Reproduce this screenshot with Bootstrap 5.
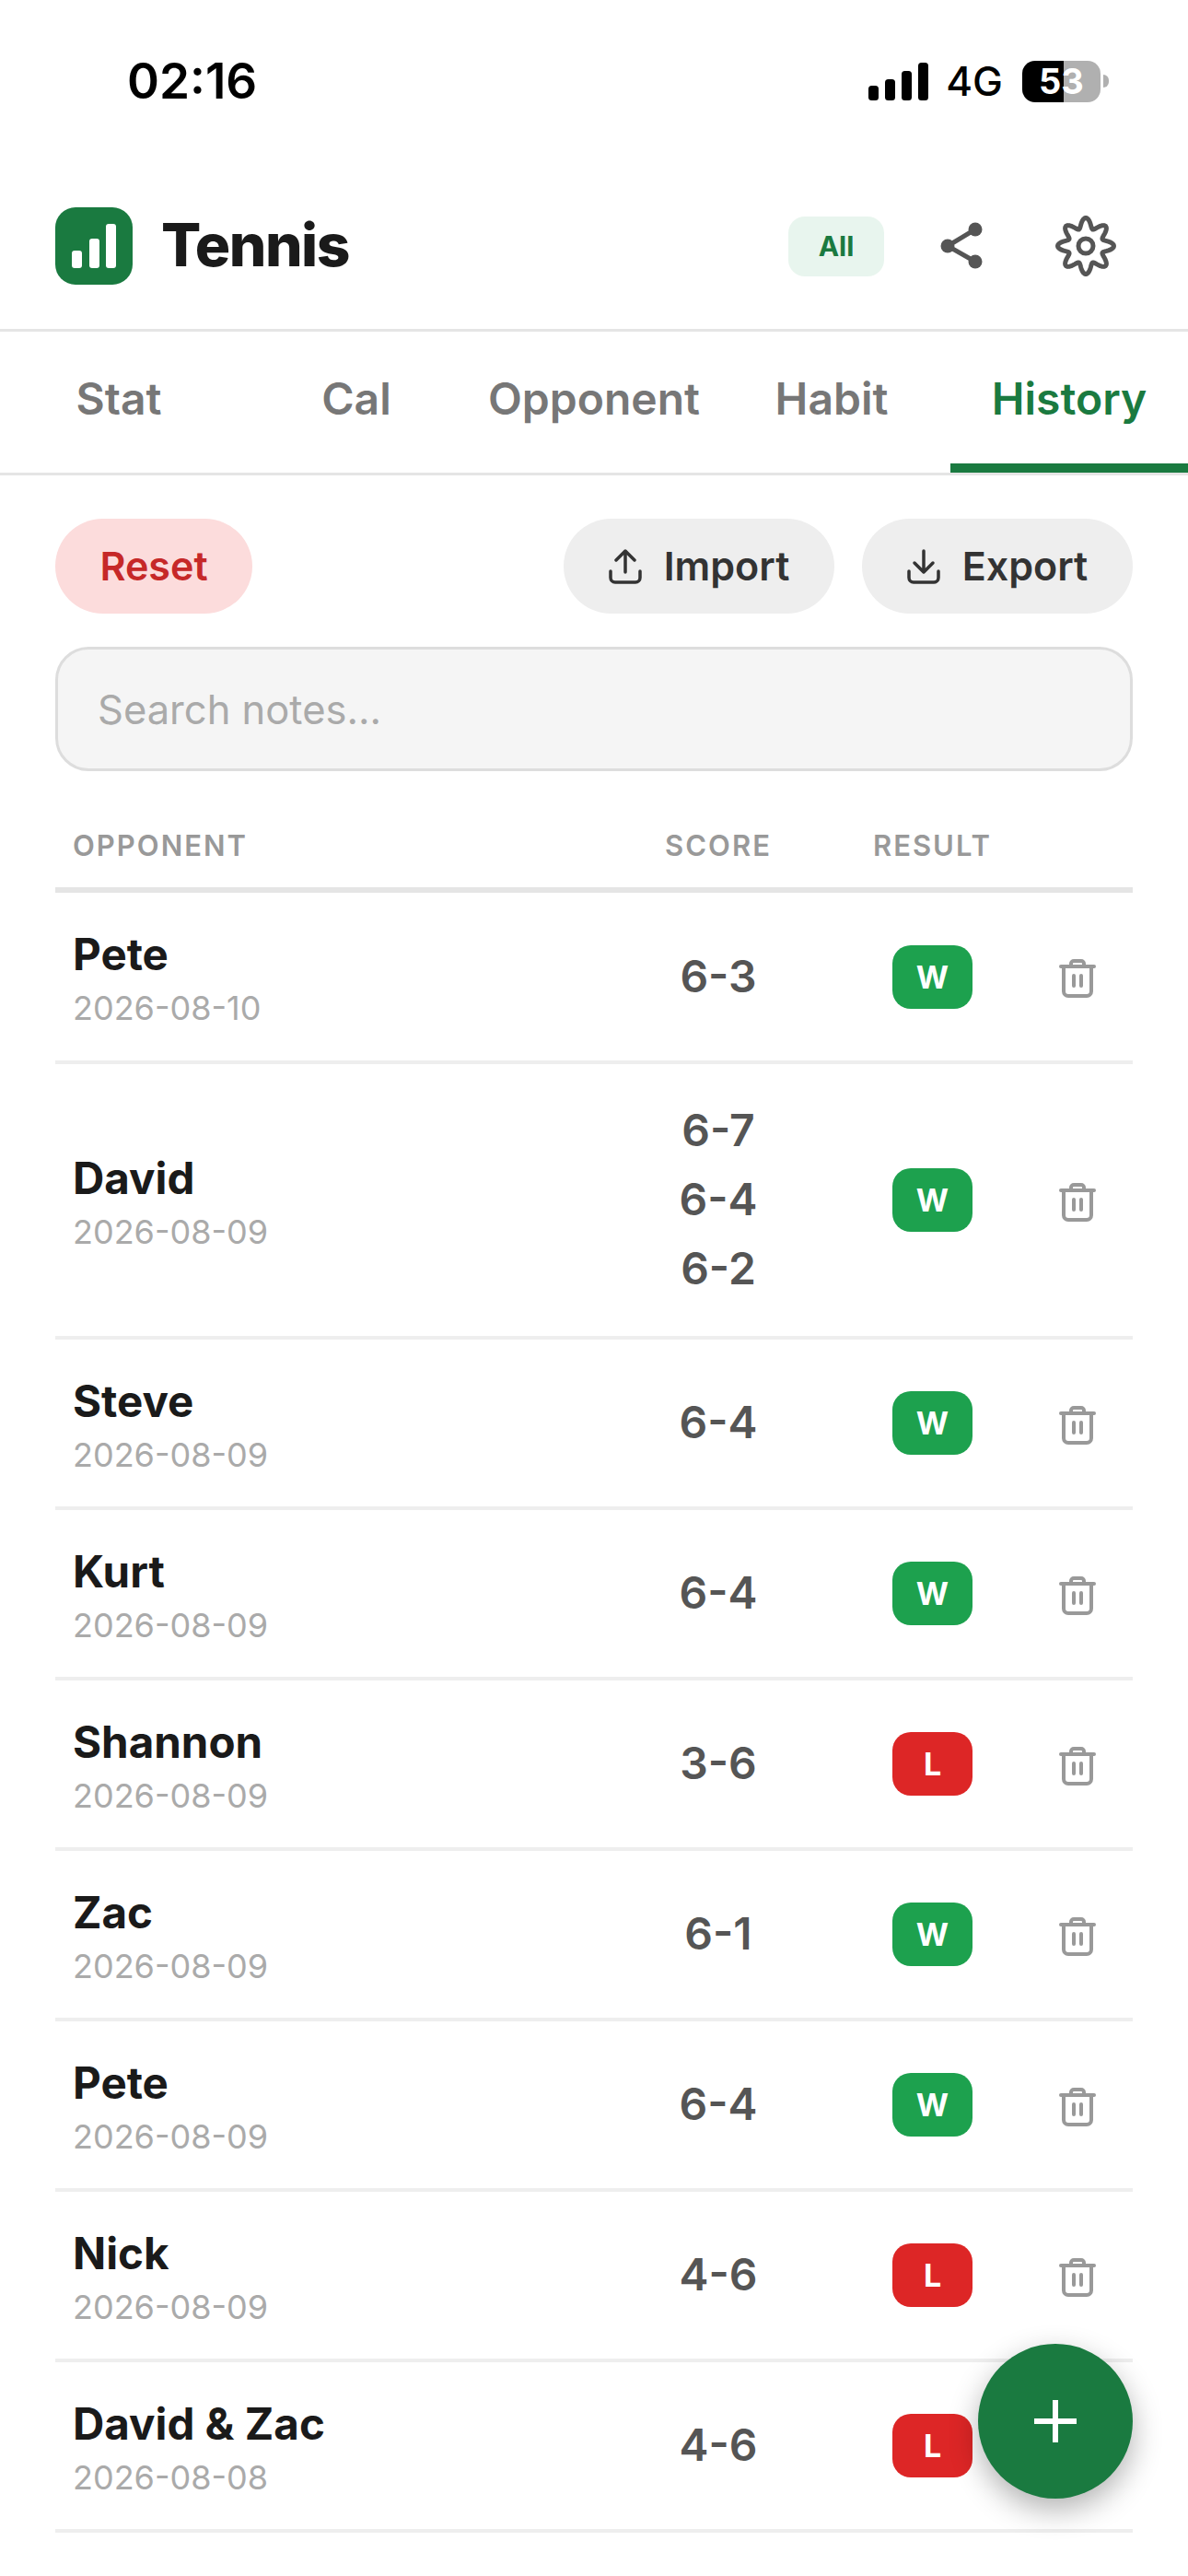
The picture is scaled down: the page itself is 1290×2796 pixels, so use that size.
<!DOCTYPE html>
<html lang="en">
  <head>
    <meta charset="UTF-8" />
    <meta name="viewport" content="width=device-width, initial-scale=1.0" />
    <link href="https://cdn.jsdelivr.net/npm/bootstrap@5.3.1/dist/css/bootstrap.min.css" rel="stylesheet" />
    <style>
      html, body { height: 2796px; overflow: hidden; }
      body { font-family: Inter, "Liberation Sans", sans-serif; background: #fff; color: #1a1a1a; }
      .app-shell { position: relative; width: 1290px; height: 2796px; overflow: hidden; }

      .status-bar { height: 177px; padding: 0 86px 1px 138px; }
      .status-time { font-size: 53px; font-weight: 600; color: #000; line-height: 1; }
      .status-signal { width: 65px; height: 41px; margin-right: 19px; }
      .status-net { font-size: 44px; font-weight: 500; color: #000; line-height: 1; margin-right: 21px; }
      .status-batt { width: 85px; height: 45px; border-radius: 14px; background: linear-gradient(90deg, #000 53%, #b0b0b0 53%); color: #fff; font-size: 38px; font-weight: 700; line-height: 45px; text-align: center; }
      .status-nub { width: 6px; height: 14px; margin-left: 3px; background: #b0b0b0; border-radius: 0 6px 6px 0; }

      .app-head { height: 183px; padding: 0 60px; border-bottom: 3px solid #e5e5e5; }
      .app-title { font-size: 64px; font-weight: 800; color: #1a1a1a; line-height: 1; letter-spacing: -1.5px; margin: 0 0 3px 31px; }
      .scope-chip { width: 104px; height: 65px; background: #e8f5ee; color: #1a7a40; border-radius: 18px; font-size: 30px; font-weight: 700; line-height: 65px; text-align: center; }
      .head-share { width: 50px; height: 60px; margin-left: 59px; }
      .head-gear { width: 70px; height: 70px; margin: 0 16px 0 75px; }

      .tab-strip { height: 156px; border-bottom: 3px solid #e5e5e5; }
      .tab-strip .nav-link { height: 153px; padding: 0; line-height: 145px; font-size: 48px; font-weight: 600; color: #777; border-radius: 0; }
      .tab-strip .nav-link.active { color: #1a7a40; border-bottom: 10px solid #1a7a40; background: none; }

      .tools { padding: 47px 60px 0; }
      .btn-pilled { height: 103px; border: 0; font-size: 43px; font-weight: 600; padding: 0; line-height: 1; }
      .btn-reset { background: #fcdcdc; color: #c62828; width: 214px; }
      .btn-file { background: #eeeeee; color: #333; width: 294px; }
      .btn-file + .btn-file { margin-left: 30px; }
      .btn-file svg { width: 36px; height: 38px; }
      .search-notes { height: 135px; margin-top: 36px; padding: 0 43px; font-size: 43.5px; background: #f5f5f5; border: 3px solid #ddd; border-radius: 36px; }
      .search-notes::placeholder { color: #aaa; opacity: 1; }

      .games-wrap { padding: 0 60px; margin-top: 36px; }
      .games { table-layout: fixed; border-collapse: separate; border-spacing: 0; width: 1170px; margin: 0; }
      .games col:nth-child(1) { width: 585px; }
      .games col:nth-child(2) { width: 270px; }
      .games col:nth-child(3) { width: 195px; }
      .games col:nth-child(4) { width: 120px; }
      .games th { height: 96px; padding: 0; font-size: 31px; font-weight: 600; letter-spacing: 2px; color: #999; border-bottom: 6px solid #e5e5e5; vertical-align: middle; text-align: center; }
      .games th:first-child, .games td:first-child { text-align: left; padding-left: 19px; }
      .games td { height: 185px; padding: 0; border-bottom: 4px solid #eeeeee; vertical-align: middle; text-align: center; }
      .games tbody tr:first-child td { height: 186px; }
      .games td.game-score { padding: 34px 0 36px; }
      .games td.game-del { padding-top: 4px; }
      .player-name { font-size: 47.5px; font-weight: 700; line-height: 68px; color: #1a1a1a; }
      .player-date { font-size: 36px; font-weight: 400; line-height: 48px; color: #aaa; }
      .score-line { font-size: 48px; font-weight: 600; line-height: 75px; color: #555; }
      .res-chip { display: inline-block; width: 87px; height: 69px; padding: 0; border-radius: 20px; font-size: 34px; font-weight: 700; line-height: 69px; color: #fff; }
      .res-W { background: #1da14e; }
      .res-L { background: #dd2626; }
      .trash-ico { width: 40px; height: 42px; display: block; margin: 0 auto; }

      .fab-add { position: absolute; left: 1062px; top: 2544px; width: 168px; height: 168px; border: 0; border-radius: 50%; background: #1a7a40; box-shadow: 0 12px 32px rgba(0, 0, 0, .3); padding: 0; }
      .fab-add svg { width: 46px; height: 46px; }
    </style>
    <title>Tennis</title>
  </head>
  <body>
    <template id="game-template">
      <tr>
        <td><div class="player-name"></div><div class="player-date"></div></td>
        <td class="game-score"></td>
        <td><span class="badge res-chip"></span></td>
        <td class="game-del">
          <svg class="trash-ico" viewBox="0 0 40 42" fill="none" stroke="#999" stroke-width="4" stroke-linecap="round" stroke-linejoin="round">
            <path d="M2 8h36" />
            <path d="M13 7V5a3 3 0 0 1 3-3h8a3 3 0 0 1 3 3v2" />
            <path d="M5 8v27a5 5 0 0 0 5 5h20a5 5 0 0 0 5-5V8" />
            <path d="M16 18v11M24 18v11" />
          </svg>
        </td>
      </tr>
    </template>

    <div class="app-shell">
      <div class="status-bar d-flex align-items-center">
        <div class="status-time">02:16</div>
        <div class="ms-auto d-flex align-items-center">
          <svg class="status-signal" viewBox="0 0 65 41">
            <rect x="0" y="25" width="11" height="16" rx="3.5" />
            <rect x="18" y="18" width="11" height="23" rx="3.5" />
            <rect x="36" y="9" width="11" height="32" rx="3.5" />
            <rect x="54" y="0" width="11" height="41" rx="3.5" />
          </svg>
          <div class="status-net">4G</div>
          <div class="status-batt">53</div>
          <div class="status-nub"></div>
        </div>
      </div>

      <div class="app-head d-flex align-items-center">
        <svg width="84" height="84" viewBox="0 0 84 84">
          <rect width="84" height="84" rx="22" fill="#1a7a40" />
          <rect x="18" y="47" width="11" height="19" rx="3" fill="#fff" />
          <rect x="37" y="34" width="11" height="32" rx="3" fill="#fff" />
          <rect x="55" y="18" width="11" height="48" rx="3" fill="#fff" />
        </svg>
        <h1 class="app-title">Tennis</h1>
        <div class="scope-chip ms-auto">All</div>
        <svg class="head-share" viewBox="0 0 50 60" fill="#555" stroke="#555">
          <path d="M40 12L10 30L40 47" fill="none" stroke-width="5" />
          <circle cx="40" cy="12" r="7.5" stroke="none" />
          <circle cx="10" cy="30" r="7.5" stroke="none" />
          <circle cx="40" cy="47" r="7.5" stroke="none" />
        </svg>
        <svg class="head-gear" viewBox="-35 -35 70 70" fill="none" stroke="#555" stroke-width="5" stroke-linejoin="round">
          <path id="gear-outline" />
          <circle r="8" />
        </svg>
      </div>

      <ul class="nav nav-justified tab-strip">
        <li class="nav-item"><a class="nav-link" href="#">Stat</a></li>
        <li class="nav-item"><a class="nav-link" href="#">Cal</a></li>
        <li class="nav-item"><a class="nav-link" href="#">Opponent</a></li>
        <li class="nav-item"><a class="nav-link" href="#">Habit</a></li>
        <li class="nav-item"><a class="nav-link active" href="#">History</a></li>
      </ul>

      <div class="tools">
        <div class="d-flex align-items-center">
          <button type="button" class="btn rounded-pill btn-pilled btn-reset">Reset</button>
          <button type="button" class="btn rounded-pill btn-pilled btn-file ms-auto d-flex align-items-center justify-content-center gap-4">
            <svg viewBox="0 0 36 38" fill="none" stroke="#333" stroke-width="3.5" stroke-linecap="round" stroke-linejoin="round">
              <path d="M18 25V2M8 12L18 2l10 10" />
              <path d="M2 24v7a5 5 0 0 0 5 5h22a5 5 0 0 0 5-5v-7" />
            </svg>
            Import
          </button>
          <button type="button" class="btn rounded-pill btn-pilled btn-file d-flex align-items-center justify-content-center gap-4">
            <svg viewBox="0 0 36 38" fill="none" stroke="#333" stroke-width="3.5" stroke-linecap="round" stroke-linejoin="round">
              <path d="M18 2v23M8 15l10 10 10-10" />
              <path d="M2 24v7a5 5 0 0 0 5 5h22a5 5 0 0 0 5-5v-7" />
            </svg>
            Export
          </button>
        </div>
        <input type="text" class="form-control search-notes" placeholder="Search notes..." />
      </div>

      <div class="games-wrap">
        <table class="games">
          <colgroup><col /><col /><col /><col /></colgroup>
          <thead>
            <tr><th>OPPONENT</th><th>SCORE</th><th>RESULT</th><th></th></tr>
          </thead>
          <tbody id="game-list"></tbody>
        </table>
      </div>

      <button type="button" class="fab-add d-flex align-items-center justify-content-center">
        <svg viewBox="0 0 46 46" stroke="#fff" stroke-width="6"><path d="M23 0v46M0 23h46" /></svg>
      </button>
    </div>

    <script>
      let gameList = [
        { name: "Pete", date: "2026-08-10", scores: ["6-3"], result: "W" },
        { name: "David", date: "2026-08-09", scores: ["6-7", "6-4", "6-2"], result: "W" },
        { name: "Steve", date: "2026-08-09", scores: ["6-4"], result: "W" },
        { name: "Kurt", date: "2026-08-09", scores: ["6-4"], result: "W" },
        { name: "Shannon", date: "2026-08-09", scores: ["3-6"], result: "L" },
        { name: "Zac", date: "2026-08-09", scores: ["6-1"], result: "W" },
        { name: "Pete", date: "2026-08-09", scores: ["6-4"], result: "W" },
        { name: "Nick", date: "2026-08-09", scores: ["4-6"], result: "L" },
        { name: "David & Zac", date: "2026-08-08", scores: ["4-6"], result: "L" },
        { name: "Nick", date: "2026-08-08", scores: ["6-4"], result: "W" },
      ];

      // put one game into the table
      function placeGame(game) {
        const row = document.getElementById("game-template").content.cloneNode(true);
        row.querySelector(".player-name").innerText = game.name;
        row.querySelector(".player-date").innerText = game.date;
        row.querySelector(".game-score").innerHTML = game.scores
          .map((s) => `<div class="score-line">${s}</div>`)
          .join("");
        const chip = row.querySelector(".res-chip");
        chip.innerText = game.result;
        chip.classList.add("res-" + game.result);
        document.getElementById("game-list").appendChild(row);
      }

      // eight soft lobes for the settings gear
      function drawGear() {
        let d = "";
        for (let i = 0; i <= 160; i++) {
          const a = (i / 160) * Math.PI * 2;
          const r = 25 + 5.5 * Math.cos(8 * a);
          d += (i ? "L" : "M") + (r * Math.sin(a)).toFixed(2) + " " + (-r * Math.cos(a)).toFixed(2);
        }
        document.getElementById("gear-outline").setAttribute("d", d + "Z");
      }

      gameList.forEach((g) => placeGame(g));
      drawGear();
    </script>
    <script src="https://cdn.jsdelivr.net/npm/bootstrap@5.3.1/dist/js/bootstrap.bundle.min.js"></script>
  </body>
</html>
